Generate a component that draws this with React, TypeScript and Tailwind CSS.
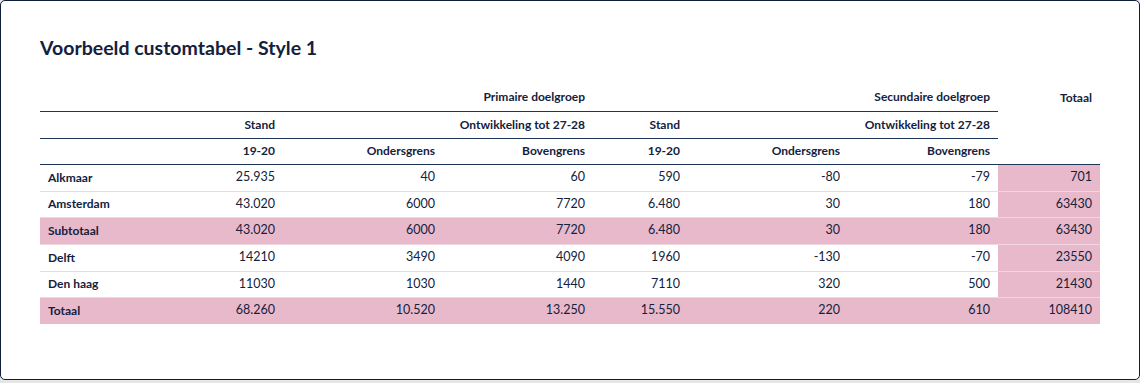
import React from "react";

const rows = [
  { label: "Alkmaar", v: ["25.935", "40", "60", "590", "-80", "-79", "701"], hl: false },
  { label: "Amsterdam", v: ["43.020", "6000", "7720", "6.480", "30", "180", "63430"], hl: false },
  { label: "Subtotaal", v: ["43.020", "6000", "7720", "6.480", "30", "180", "63430"], hl: true },
  { label: "Delft", v: ["14210", "3490", "4090", "1960", "-130", "-70", "23550"], hl: false },
  { label: "Den haag", v: ["11030", "1030", "1440", "7110", "320", "500", "21430"], hl: false },
  { label: "Totaal", v: ["68.260", "10.520", "13.250", "15.550", "220", "610", "108410"], hl: true },
];

const heights = ["h-[27px]", "h-[26px]", "h-[27px]", "h-[27px]", "h-[26px]", "h-[27px]"];

const th = "text-right px-2 border-b border-[#1e3558] font-bold text-[12px]";

export default function App() {
  return (
    <div className="w-[1140px] h-[383px] bg-[#e6e6e6]" style={{ fontFamily: "Lato, 'Noto Sans', sans-serif" }}>
      <div className="w-[1140px] h-[380px] bg-white border border-[#0f1c3a] rounded-[5px] px-[39px] pt-[34px] text-[#14213d]">
        <h1 className="text-[19.5px] leading-[26px] font-bold text-[#14213d]">Voorbeeld customtabel - Style 1</h1>
        <table className="table-fixed w-[1060px] mt-[23px] border-collapse text-[12.5px]">
          <colgroup>
            <col className="w-[143px]" />
            <col className="w-[100px]" />
            <col className="w-[160px]" />
            <col className="w-[150px]" />
            <col className="w-[95px]" />
            <col className="w-[160px]" />
            <col className="w-[150px]" />
            <col className="w-[102px]" />
          </colgroup>
          <thead>
            <tr className="h-[27px]">
              <th colSpan={4} className={th}>Primaire doelgroep</th>
              <th colSpan={3} className={th}>Secundaire doelgroep</th>
              <th rowSpan={3} className={`${th} align-top pt-[5px]`}>Totaal</th>
            </tr>
            <tr className="h-[27px]">
              <th className="border-b border-[#1e3558]"></th>
              <th className={th}>Stand</th>
              <th colSpan={2} className={th}>Ontwikkeling tot 27-28</th>
              <th className={th}>Stand</th>
              <th colSpan={2} className={th}>Ontwikkeling tot 27-28</th>
            </tr>
            <tr className="h-[26px]">
              <th className="border-b border-[#1e3558]"></th>
              <th className={th}>19-20</th>
              <th className={th}>Ondersgrens</th>
              <th className={th}>Bovengrens</th>
              <th className={th}>19-20</th>
              <th className={th}>Ondersgrens</th>
              <th className={th}>Bovengrens</th>
            </tr>
          </thead>
          <tbody>
            {rows.map((r, i) => (
              <tr
                key={r.label}
                className={`${heights[i]} ${r.hl ? "bg-[#e8b9cb]" : ""} ${i < rows.length - 1 ? "border-b border-[#f1d6e0]" : ""}`}
              >
                <td className="px-2 font-bold text-left text-[12px]">{r.label}</td>
                {r.v.map((v, j) => (
                  <td key={j} className={`px-2 text-right ${j === 6 ? "bg-[#e8b9cb]" : ""}`}>
                    {v}
                  </td>
                ))}
              </tr>
            ))}
          </tbody>
        </table>
      </div>
    </div>
  );
}
